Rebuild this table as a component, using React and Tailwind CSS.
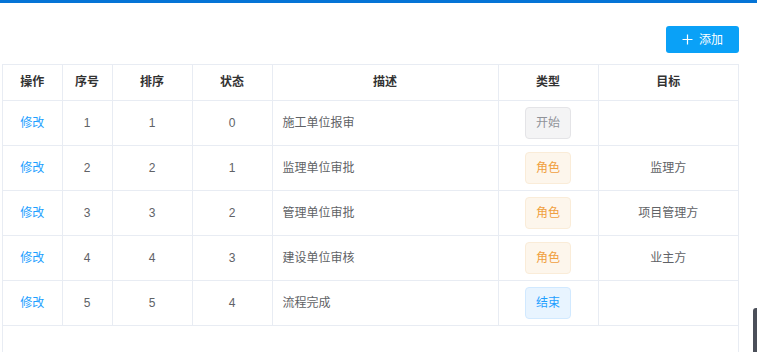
import React from 'react';

const rows = [
  { id: 1, sort: 1, state: 0, desc: '施工单位报审', type: 'start', target: '' },
  { id: 2, sort: 2, state: 1, desc: '监理单位审批', type: 'role', target: '监理方' },
  { id: 3, sort: 3, state: 2, desc: '管理单位审批', type: 'role', target: '项目管理方' },
  { id: 4, sort: 4, state: 3, desc: '建设单位审核', type: 'role', target: '业主方' },
  { id: 5, sort: 5, state: 4, desc: '流程完成', type: 'end', target: '' },
];

const tagStyles = {
  start: { label: '开始', cls: 'bg-[#f4f4f5] border-[#e4e4e7] text-[#909399]' },
  role: { label: '角色', cls: 'bg-[#fdf6ec] border-[#faecd8] text-[#f0a040]' },
  end: { label: '结束', cls: 'bg-[#e8f4ff] border-[#d1e9ff] text-[#1e9fff]' },
};

const Tag = ({ type }) => {
  const t = tagStyles[type];
  return (
    <span className={`inline-flex h-[32px] w-[46px] items-center justify-center rounded-[4px] border text-[12px] ${t.cls}`}>
      {t.label}
    </span>
  );
};

const headers = ['操作', '序号', '排序', '状态', '描述', '类型', '目标'];
const widths = [59, 50, 80, 80, 226, 100, 140];

export default function App() {
  return (
    <div
      className="relative flex h-[352px] w-[757px] flex-col overflow-hidden bg-white"
      style={{ fontFamily: '"Liberation Sans", "Noto Sans CJK SC", sans-serif' }}
    >
      <div className="h-[3px] bg-[#0574d6]" />

      <div className="flex justify-end pr-[18px] pt-[23px]">
        <button className="flex h-[27px] w-[73px] items-center justify-center gap-[6px] rounded-[3px] bg-[#0aa1f7] text-[12px] text-white">
          <svg width="11" height="11" viewBox="0 0 11 11" fill="none" stroke="white" strokeWidth="1.2">
            <path d="M5.5 0.5v10M0.5 5.5h10" />
          </svg>
          添加
        </button>
      </div>

      <div className="ml-[2px] mt-[11px] w-[737px] flex-1 border-x border-t border-[#e8ecf3]">
        <table className="w-full table-fixed border-collapse text-[12px]">
          <colgroup>
            {widths.map((w, i) => (
              <col key={i} style={{ width: w }} />
            ))}
          </colgroup>
          <thead>
            <tr className="h-[35px]">
              {headers.map((h, i) => (
                <th
                  key={h}
                  className={`border-b border-[#e8ecf3] text-center font-bold text-[#333] ${i > 0 ? 'border-l' : ''}`}
                >
                  {h}
                </th>
              ))}
            </tr>
          </thead>
          <tbody>
            {rows.map((r) => (
              <tr key={r.id} className="h-[45px] text-[#606266]">
                <td className="border-b border-[#e8ecf3] text-center text-[#1e9fff]">修改</td>
                <td className="border-b border-l border-[#e8ecf3] text-center">{r.id}</td>
                <td className="border-b border-l border-[#e8ecf3] text-center">{r.sort}</td>
                <td className="border-b border-l border-[#e8ecf3] text-center">{r.state}</td>
                <td className="border-b border-l border-[#e8ecf3] pl-[10px] text-left">{r.desc}</td>
                <td className="border-b border-l border-[#e8ecf3] text-center">
                  <Tag type={r.type} />
                </td>
                <td className="border-b border-l border-[#e8ecf3] text-center">{r.target}</td>
              </tr>
            ))}
          </tbody>
        </table>
      </div>

      <div className="absolute left-[753px] top-[308px] h-[60px] w-[10px] rounded-tl-[3px] bg-[#4b4f59]" />
    </div>
  );
}
